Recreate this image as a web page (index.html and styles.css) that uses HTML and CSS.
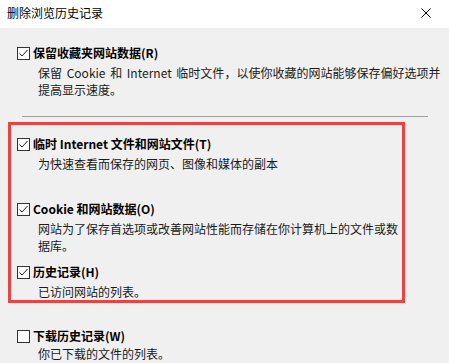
FILE: index.html
```html
<!DOCTYPE html>
<html lang="zh-CN">
<head>
<meta charset="utf-8">
<title>删除浏览历史记录</title>
<link rel="stylesheet" href="styles.css">
</head>
<body>
<div class="window">
  <div class="titlebar">
    <span class="title">删除浏览历史记录</span>
    <svg class="close" width="10" height="10" viewBox="0 0 10 10"><path d="M0.5 0.5L9.5 9.5M9.5 0.5L0.5 9.5" stroke="#000" stroke-width="1" fill="none"/></svg>
  </div>
  <div class="content">
    <div class="item item-first">
      <div class="head"><span class="box checked"><svg width="11" height="11" viewBox="0 0 11 11"><path d="M1.5 5.5L4 8L9.5 2" stroke="#222" stroke-width="1" fill="none"/></svg></span><span class="label">保留收藏夹网站数据(R)</span></div>
      <div class="desc"><span class="wide">保留 Cookie 和 Internet 临时文件</span>，以使你收藏的网站能够保存偏好选项并<br>提高显示速度。</div>
    </div>
    <div class="sep"></div>
    <div class="highlight">
      <div class="item item-temp">
        <div class="head"><span class="box checked"><svg width="11" height="11" viewBox="0 0 11 11"><path d="M1.5 5.5L4 8L9.5 2" stroke="#222" stroke-width="1" fill="none"/></svg></span><span class="label">临时 Internet 文件和网站文件(T)</span></div>
        <div class="desc">为快速查看而保存的网页、图像和媒体的副本</div>
      </div>
      <div class="item item-cookie">
        <div class="head"><span class="box checked"><svg width="11" height="11" viewBox="0 0 11 11"><path d="M1.5 5.5L4 8L9.5 2" stroke="#222" stroke-width="1" fill="none"/></svg></span><span class="label">Cookie 和网站数据(O)</span></div>
        <div class="desc">网站为了保存首选项或改善网站性能而存储在你计算机上的文件或数<br>据库。</div>
      </div>
      <div class="item">
        <div class="head"><span class="box checked"><svg width="11" height="11" viewBox="0 0 11 11"><path d="M1.5 5.5L4 8L9.5 2" stroke="#222" stroke-width="1" fill="none"/></svg></span><span class="label">历史记录(H)</span></div>
        <div class="desc">已访问网站的列表。</div>
      </div>
    </div>
    <div class="item item-download">
      <div class="head"><span class="box"></span><span class="label">下载历史记录(W)</span></div>
      <div class="desc">你已下载的文件的列表。</div>
    </div>
  </div>
</div>
</body>
</html>
```
FILE: styles.css
```css
html, body {
  margin: 0;
  padding: 0;
}
body {
  width: 449px;
  height: 363px;
  overflow: hidden;
  background: #f0f0f0;
  font-family: "Microsoft YaHei", "Noto Sans CJK SC", sans-serif;
  font-size: 12px;
  color: #000;
}
.window {
  width: 449px;
  height: 363px;
  display: flex;
  flex-direction: column;
}
.titlebar {
  height: 28px;
  background: #fff;
  display: flex;
  align-items: center;
  justify-content: space-between;
  padding: 0 18px 2px 7px;
  box-sizing: border-box;
  flex-shrink: 0;
}
.title {
  font-size: 12px;
  color: #000;
  line-height: 16px;
}
.close {
  display: block;
}
.content {
  padding: 15px 0 0 17px;
  display: flex;
  flex-direction: column;
}
.item {
  display: flex;
  flex-direction: column;
}
.head {
  display: flex;
  align-items: center;
  height: 20px;
}
.box {
  width: 13px;
  height: 13px;
  box-sizing: border-box;
  border: 1px solid #333;
  background: #fff;
  display: flex;
  align-items: center;
  justify-content: center;
  flex-shrink: 0;
}
.box svg {
  display: block;
}
.label {
  margin-left: 3px;
  font-weight: bold;
  line-height: 20px;
  white-space: nowrap;
}
.desc {
  margin-top: 1px;
  margin-left: 21px;
  line-height: 17px;
  color: #1a1a1a;
  white-space: nowrap;
}
.wide {
  word-spacing: 2px;
}
.sep {
  margin-top: 18px;
  margin-left: 5px;
  width: 406px;
  height: 1px;
  background: #a0a0a0;
}
.highlight {
  margin-top: 5px;
  margin-left: -9px;
  width: 397px;
  box-sizing: border-box;
  border: 3px solid #e84444;
  padding: 9px 0 0 6px;
  display: flex;
  flex-direction: column;
}
.item-temp {
  margin-bottom: 27px;
}
.item-cookie {
  margin-bottom: 8px;
}
.item-download {
  margin-top: 23px;
}
.item-download .desc {
  margin-top: 0;
  line-height: 16px;
}
```
